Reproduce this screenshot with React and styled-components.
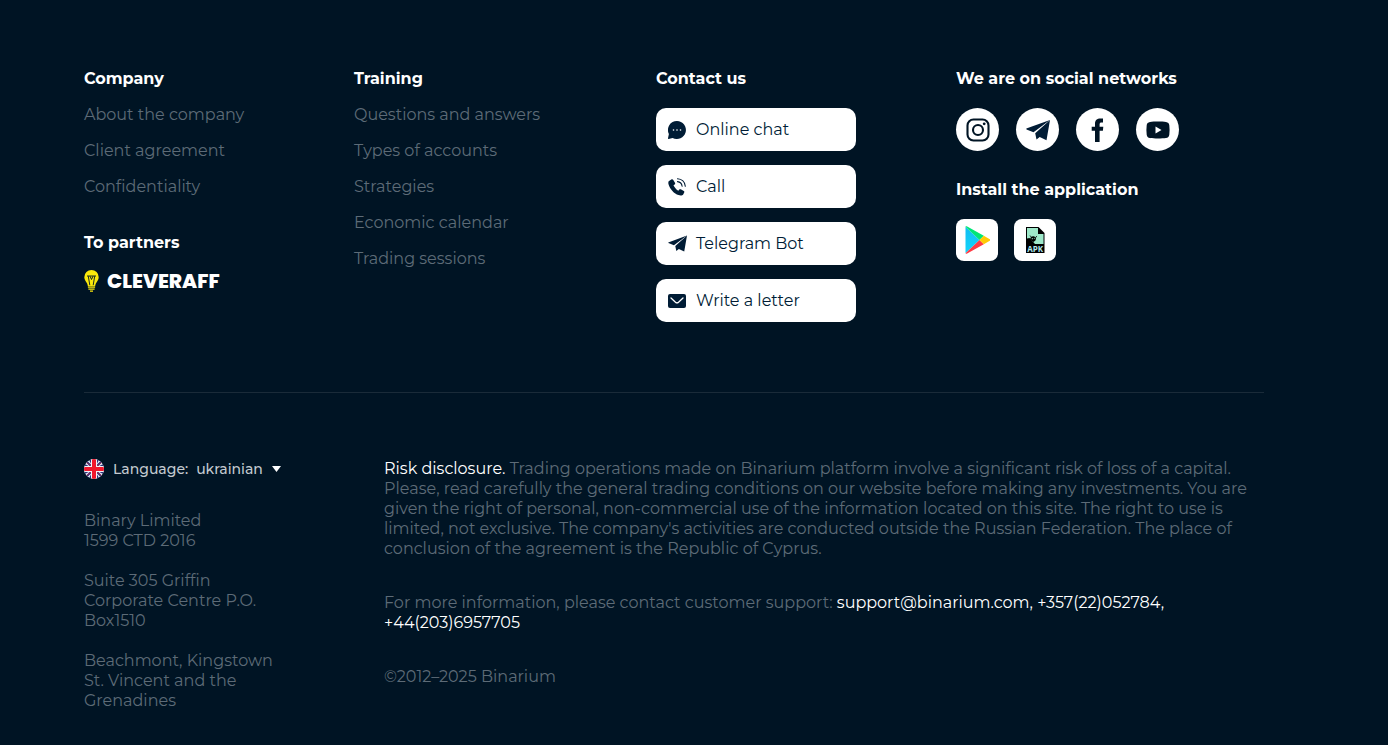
import React, { useState } from 'react';
import styled, { createGlobalStyle } from 'styled-components';

const companyLinks = ['About the company', 'Client agreement', 'Confidentiality'];

const trainingLinks = [
  'Questions and answers',
  'Types of accounts',
  'Strategies',
  'Economic calendar',
  'Trading sessions',
];

const contacts = [
  { label: 'Online chat', icon: <ChatIcon /> },
  { label: 'Call', icon: <CallIcon /> },
  { label: 'Telegram Bot', icon: <PlaneIcon size={19} /> },
  { label: 'Write a letter', icon: <MailIcon /> },
];

const socials = [
  { label: 'Instagram', icon: <InstagramIcon /> },
  { label: 'Telegram', icon: <PlaneIcon size={24} /> },
  { label: 'Facebook', icon: <FacebookIcon /> },
  { label: 'YouTube', icon: <YoutubeIcon /> },
];

export default function App() {
  const [language, setLanguage] = useState('ukrainian');

  return (
    <>
      <GlobalStyle />
      <Footer>
        <Top>
          <div>
            <Title>Company</Title>
            <LinkList items={companyLinks} />
            <Title $spaced>To partners</Title>
            <Partner href="#cleveraff">
              <BulbIcon />
              CLEVERAFF
            </Partner>
          </div>
          <div>
            <Title>Training</Title>
            <LinkList items={trainingLinks} />
          </div>
          <div>
            <Title>Contact us</Title>
            <Contacts>
              {contacts.map(({ label, icon }) => (
                <ContactButton type="button" key={label}>
                  <ContactIcon>{icon}</ContactIcon>
                  {label}
                </ContactButton>
              ))}
            </Contacts>
          </div>
          <div>
            <Title>We are on social networks</Title>
            <IconRow>
              {socials.map(({ label, icon }) => (
                <SocialLink href="#social" aria-label={label} key={label}>
                  {icon}
                </SocialLink>
              ))}
            </IconRow>
            <Title $compact>Install the application</Title>
            <IconRow $apps>
              <AppLink href="#google-play" aria-label="Google Play">
                <PlayIcon />
              </AppLink>
              <AppLink href="#apk" aria-label="Android package">
                <ApkIcon />
              </AppLink>
            </IconRow>
          </div>
        </Top>
        <Bottom>
          <div>
            <Language>
              <FlagIcon />
              <label htmlFor="language">Language:</label>
              <LanguageSelect
                id="language"
                value={language}
                onChange={(e) => setLanguage(e.target.value)}
              >
                <option value="ukrainian">ukrainian</option>
              </LanguageSelect>
              <svg width="9" height="6" viewBox="0 0 9 6" aria-hidden="true">
                <path d="M0 0h9L4.500 6z" fill="#fff" />
              </svg>
            </Language>
            <Address>
              <p>
                Binary Limited
                <br />
                1599 CTD 2016
              </p>
              <p>
                Suite 305 Griffin
                <br />
                Corporate Centre P.O.
                <br />
                Box1510
              </p>
              <p>
                Beachmont, Kingstown
                <br />
                St. Vincent and the
                <br />
                Grenadines
              </p>
            </Address>
          </div>
          <Legal>
            <p>
              <Strong>Risk disclosure.</Strong> Trading operations made on Binarium platform
              involve a significant risk of loss of a capital. Please, read carefully the
              general trading conditions on our website before making any investments. You
              are given the right of personal, non-commercial use of the information located
              on this site. The right to use is limited, not exclusive. The company's
              activities are conducted outside the Russian Federation. The place of
              conclusion of the agreement is the Republic of Cyprus.
            </p>
            <p>
              For more information, please contact customer support:{' '}
              <Support href="mailto:support@binarium.com">support@binarium.com,</Support>{' '}
              <Support href="tel:+35722052784">+357(22)052784,</Support>{' '}
              <Support href="tel:+442036957705">+44(203)6957705</Support>
            </p>
            <p>©2012–2025 Binarium</p>
          </Legal>
        </Bottom>
      </Footer>
    </>
  );
}

function LinkList({ items }) {
  return (
    <List>
      {items.map((item) => (
        <li key={item}>
          <FooterLink href="#page">{item}</FooterLink>
        </li>
      ))}
    </List>
  );
}

function BulbIcon() {
  return (
    <svg width="15" height="22" viewBox="0 0 15 22" aria-hidden="true">
      <path
        d="M7.5 0a7.2 7.2 0 0 0-7.200 7.200c0 2.700 1.700 4.200 2.700 6.100.5 1 .7 2 .9 2.900h7.200c.2-.9.4-1.900.9-2.900 1-1.900 2.700-3.400 2.700-6.100A7.200 7.200 0 0 0 7.500 0z"
        fill="#fbe90b"
      />
      <path
        d="M3 6h9M4.300 6.200l1.500 9M10.700 6.200l-1.500 9M6 6.200l1.500 3.300L9 6.200"
        fill="none"
        stroke="#001424"
        strokeWidth=".9"
      />
      <path d="M3.900 17.200h7.200M4.400 19.200h6.200M6 21.200h3" stroke="#fbe90b" strokeWidth="1.300" />
    </svg>
  );
}

function ChatIcon() {
  return (
    <svg width="18" height="18" viewBox="0 0 18 18" aria-hidden="true">
      <path
        d="M9 0a9 9 0 1 1-4.400 16.900L.6 18c-.4.100-.7-.3-.6-.7l.9-4.200A9 9 0 0 1 9 0z"
        fill="#001c35"
      />
      <circle cx="5.500" cy="9" r=".8" fill="#fff" />
      <circle cx="9" cy="9" r=".8" fill="#fff" />
      <circle cx="12.500" cy="9" r=".8" fill="#fff" />
    </svg>
  );
}

function CallIcon() {
  return (
    <svg width="18" height="18" viewBox="0 0 18 18" aria-hidden="true">
      <path
        d="M3.300 1.500 1 2.900C.2 3.500.2 5 .6 6.500c1.400 4.800 5.600 9.300 9.900 10.600 1.900.6 3.900.5 4.700-.7l1-2c.3-.6.1-1.100-.4-1.400l-3-1.700c-.5-.3-1.100-.2-1.500.3l-1 1.100C8.200 11.600 6.400 9.400 5.500 7.300l1.200-.9c.5-.4.6-.9.4-1.400L5.300 2c-.5-.8-1.200-1-2-.5z"
        fill="#001c35"
      />
      <path
        d="M9.500 3.600c2.700.3 4.300 2 4.600 4.600M9.500.7c4.300.2 7.400 3.300 7.800 7.500"
        fill="none"
        stroke="#001c35"
        strokeWidth="1.100"
        strokeLinecap="round"
      />
    </svg>
  );
}

function PlaneIcon({ size }) {
  return (
    <svg width={size} height={size} viewBox="0 0 24 24" fill="#001c35" aria-hidden="true">
      <path d="M24 2 .3 10.600l.2.900 7 2.800z" />
      <path d="M24 2 9.200 15.200l1.300 6.400 3.200-2.600 6.800 3.200z" />
    </svg>
  );
}

function MailIcon() {
  return (
    <svg width="18" height="14" viewBox="0 0 18 14" aria-hidden="true">
      <rect width="18" height="14" rx="2" fill="#001c35" />
      <path
        d="m3 4 4.500 4.200c.9.800 2.100.8 3 0L15 4"
        fill="none"
        stroke="#fff"
        strokeWidth="1.300"
        strokeLinecap="round"
      />
    </svg>
  );
}

function InstagramIcon() {
  return (
    <svg width="24" height="24" viewBox="0 0 24 24" fill="none" stroke="#001424" aria-hidden="true">
      <rect x="1.500" y="1.500" width="21" height="21" rx="6" strokeWidth="2.100" />
      <circle cx="12" cy="12" r="5" strokeWidth="2.100" />
      <circle cx="18.200" cy="5.800" r="1.400" fill="#001424" stroke="none" />
    </svg>
  );
}

function FacebookIcon() {
  return (
    <svg width="13" height="24" viewBox="0 0 13 24" aria-hidden="true">
      <path
        d="M8.600 24V12.800h3.300l.4-4H8.600V6.300c0-1.300.6-1.900 1.900-1.900H12V.5H9.500C6 .5 4 2.300 4 5.600v3.200H.7v4H4V24z"
        fill="#001424"
      />
    </svg>
  );
}

function YoutubeIcon() {
  return (
    <svg width="24" height="18" viewBox="0 0 24 18" aria-hidden="true">
      <path
        d="M4 .9C8 .3 16 .3 20 .9c2 .3 3.100 1.400 3.300 3.300.4 3.200.4 6.400 0 9.600-.2 1.900-1.300 3-3.300 3.300-4 .6-12 .6-16 0-2-.3-3.100-1.400-3.300-3.300-.4-3.200-.4-6.400 0-9.600C.9 2.300 2 1.200 4 .9z"
        fill="#001424"
      />
      <path d="M9.500 5.500v7l6-3.500z" fill="#fff" />
    </svg>
  );
}

function PlayIcon() {
  return (
    <svg width="26" height="28" viewBox="-1 0 26 28" aria-hidden="true">
      <defs>
        <linearGradient id="play-blue" x1="0" y1="0" x2="0" y2="1">
          <stop offset="0" stopColor="#11bdf2" />
          <stop offset="1" stopColor="#12d5fa" />
        </linearGradient>
      </defs>
      <path d="M.5.8v26.400L14.500 14z" fill="url(#play-blue)" />
      <path d="M.5.8C.8.2 1.500.2 2.200.6l16.600 9.100L14.500 14z" fill="#00e676" />
      <path d="M.5 27.200c.3.600 1 .6 1.700.2l16.600-9.100L14.500 14z" fill="#ff3a44" />
      <path d="m18.800 9.700 6 3.500c.7.4.7 1.200 0 1.600l-6 3.500L14.500 14z" fill="#ffca05" />
    </svg>
  );
}

function ApkIcon() {
  return (
    <svg width="20" height="26" viewBox="0 0 20 26" aria-hidden="true">
      <path d="M1 0h12.500L19.500 6v20H1z" fill="#000" />
      <path d="M2 1h11v6h5.500v10H2z" fill="#9ee8c9" />
      <path d="M2 11.500 4.500 11l5.500 6H2z" fill="#000" />
      <path d="M5 12.500a3.200 3.200 0 0 1 5.400-2.300c.7.900.7 2.300 0 3.300L8.500 15z" fill="#000" />
      <path d="m5 8.500 2 2.500M11.800 9 10 11.500" stroke="#000" strokeWidth=".8" />
      <circle cx="7.300" cy="11.700" r=".6" fill="#9ee8c9" />
      <circle cx="9.300" cy="11.200" r=".5" fill="#9ee8c9" />
      <ApkText x="10.250" y="24.500" textAnchor="middle">
        APK
      </ApkText>
    </svg>
  );
}

function FlagIcon() {
  return (
    <svg width="20" height="20" viewBox="0 0 20 20" aria-hidden="true">
      <clipPath id="flag-round">
        <circle cx="10" cy="10" r="10" />
      </clipPath>
      <g clipPath="url(#flag-round)">
        <path fill="#f2f3f8" d="M0 0h20v20H0z" />
        <path
          d="M4.500 0H7v4.800zM13 0h2.500L13 4.800zM0 4.500V7h4.800zM20 4.500V7h-4.800zM0 13v2.500L4.800 13zM20 13v2.500L15.200 13zM7 15.200V20H4.500zM13 15.200V20h2.500z"
          fill="#29337a"
        />
        <path
          d="m2 2 5 5M18 2l-5 5M2 18l5-5M18 18l-5-5"
          stroke="#29337a"
          strokeWidth="2"
        />
        <path d="m2 3 5 4M18 3l-5 4M2 17l5-4M18 17l-5-4" stroke="#ee2336" strokeWidth=".6" />
        <path d="M10 0v20M0 10h20" stroke="#f2f3f8" strokeWidth="6" />
        <path d="M10 0v20M0 10h20" stroke="#f0172c" strokeWidth="4" />
      </g>
    </svg>
  );
}

const GlobalStyle = createGlobalStyle`
  * {
    box-sizing: border-box;
  }
  body {
    margin: 0;
    background-color: #001424;
    color: #5d6b77;
    font-family: Montserrat, Inter, sans-serif;
    font-size: 16px;
    line-height: 20px;
  }
  p {
    margin: 0;
  }
  a {
    color: inherit;
    text-decoration: none;
  }
  svg {
    display: block;
    flex-shrink: 0;
  }
`;

const Footer = styled.footer`
  max-width: 1220px;
  margin: 0 auto;
  padding: 69px 40px 34px 0;
`;

const Top = styled.div`
  display: grid;
  grid-template-columns: 270px 302px 300px 1fr;
  padding-bottom: 70px;
  border-bottom: 1px solid #1a2b39;
`;

const Title = styled.h2`
  margin: ${({ $spaced, $compact }) => ($spaced ? '36px' : $compact ? '29px' : '0')} 0 0;
  color: #fff;
  font-size: 16px;
  font-weight: 700;
`;

const List = styled.ul`
  display: flex;
  flex-direction: column;
  gap: 16px;
  margin: 16px 0 0;
  padding: 0;
  list-style: none;
`;

const FooterLink = styled.a`
  display: block;
  &:hover {
    color: #fff;
  }
`;

const Partner = styled.a`
  display: flex;
  align-items: center;
  gap: 8px;
  margin-top: 16px;
  color: #fff;
  font-family: Poppins, Montserrat, Inter, sans-serif;
  font-size: 20px;
  font-weight: 800;
  line-height: 24px;
`;

const Contacts = styled.div`
  display: flex;
  flex-direction: column;
  gap: 14px;
  width: 200px;
  margin-top: 19px;
`;

const ContactButton = styled.button`
  display: flex;
  align-items: center;
  height: 43px;
  padding: 0 11px;
  border: none;
  border-radius: 10px;
  background-color: #fff;
  color: #001c35;
  font: inherit;
  cursor: pointer;
`;

const ContactIcon = styled.span`
  display: flex;
  justify-content: center;
  width: 20px;
  margin-right: 9px;
`;

const IconRow = styled.div`
  display: flex;
  gap: ${({ $apps }) => ($apps ? '16px' : '17px')};
  margin-top: 19px;
`;

const SocialLink = styled.a`
  display: flex;
  align-items: center;
  justify-content: center;
  width: 43px;
  height: 43px;
  border-radius: 50%;
  background-color: #fff;
`;

const AppLink = styled(SocialLink)`
  width: 42px;
  height: 42px;
  border-radius: 8px;
`;

const ApkText = styled.text`
  fill: #b5e8ee;
  font-family: 'Open Sans', sans-serif;
  font-size: 8px;
  font-weight: 700;
`;

const Bottom = styled.div`
  display: grid;
  grid-template-columns: 300px 1fr;
  padding-top: 66px;
`;

const Language = styled.div`
  display: flex;
  align-items: center;
  color: #c3cad0;
  font-size: 14px;
  font-weight: 500;
  label {
    margin: 0 8px 0 9px;
  }
`;

const LanguageSelect = styled.select`
  appearance: none;
  field-sizing: content;
  margin: 0 9px 0 0;
  padding: 0;
  border: none;
  outline: none;
  background: none;
  color: inherit;
  font: inherit;
  cursor: pointer;
`;

const Address = styled.div`
  display: flex;
  flex-direction: column;
  gap: 20px;
  margin-top: 32px;
`;

const Legal = styled.div`
  display: flex;
  flex-direction: column;
  gap: 34px;
`;

const Strong = styled.span`
  color: #fff;
`;

const Support = styled.a`
  color: #fff;
`;
